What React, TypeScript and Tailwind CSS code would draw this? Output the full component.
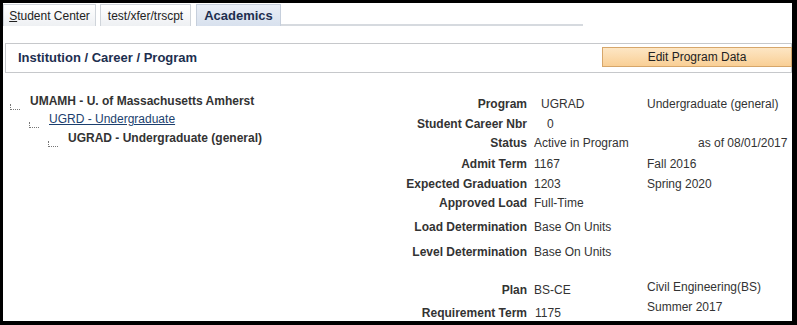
import React from "react"

const rows = [
  { label: "Program", value: "UGRAD", valueClass: "pl-[14px]", extra: "Undergraduate (general)", h: "h-[20px]" },
  { label: "Student Career Nbr", value: "0", valueClass: "pl-[20px]", extra: "", h: "h-[19px]" },
  { label: "Status", value: "Active in Program", valueClass: "pl-[7px]", extra: "", h: "h-[21px]", asOf: "as of 08/01/2017" },
  { label: "Admit Term", value: "1167", valueClass: "pl-[7px]", extra: "Fall 2016", h: "h-[20px]" },
  { label: "Expected Graduation", value: "1203", valueClass: "pl-[7px]", extra: "Spring 2020", h: "h-[19px]" },
  { label: "Approved Load", value: "Full-Time", valueClass: "pl-[7px]", extra: "", h: "h-[24px]" },
  { label: "Load Determination", value: "Base On Units", valueClass: "pl-[7px]", extra: "", h: "h-[25px]" },
  { label: "Level Determination", value: "Base On Units", valueClass: "pl-[7px]", extra: "", h: "h-[38px]" },
]

function TreeElbow() {
  return <div className="w-[10px] h-[6px] border-l border-b border-dotted border-[#777] mr-[10px] -mt-[8px] shrink-0" />
}

export default function App() {
  return (
    <div className="w-[797px] h-[325px] bg-black pt-[3px] pl-[3px] pr-[5px] pb-[4px] font-['Liberation_Sans',Arial,sans-serif] text-[12px] text-[#333]">
      <div className="w-full h-full bg-white overflow-hidden">
        {/* Tabs */}
        <div className="flex items-end h-[23px]">
          <div className="h-[22px] w-[93px] flex items-center justify-center border border-[#cfd4da] border-b-0 bg-gradient-to-b from-white to-[#eef0f3] text-[#222]">
            <span><span className="underline">S</span>tudent Center</span>
          </div>
          <div className="h-[22px] w-[91px] ml-[4px] flex items-center justify-center border border-[#cfd4da] border-b-0 bg-gradient-to-b from-white to-[#eef0f3] text-[#222]">
            test/xfer/trscpt
          </div>
          <div className="h-[22px] w-[85px] ml-[5px] flex items-center justify-center border border-[#c6cfdc] border-b-0 bg-gradient-to-b from-[#e9eef6] to-[#d8e1ee] text-[#1d2f4f] font-bold text-[13px]">
            Academics
          </div>
          <div className="w-[302px] border-b-2 border-[#d6dadf]" />
        </div>

        {/* Section header */}
        <div className="mt-[17px] ml-[2px] h-[30px] border border-[#c6c8cb] flex items-center justify-between">
          <span className="pl-[12px] font-bold text-[13px] text-[#1d2f4f]">Institution / Career / Program</span>
          <button className="h-[20px] w-[190px] -mt-[3px] mr-[-1px] border border-[#d6a66a] bg-gradient-to-b from-[#fde6c4] to-[#f9cf95] text-[#222] text-[12px]">
            Edit Program Data
          </button>
        </div>

        <div className="flex mt-[16px]">
          {/* Tree */}
          <div className="w-[374px] pl-[7px] pt-[3px]">
            <div className="flex items-end h-[18px]">
              <TreeElbow />
              <span className="font-bold">UMAMH - U. of Massachusetts Amherst</span>
            </div>
            <div className="flex items-end h-[18px] pl-[19px]">
              <TreeElbow />
              <span className="underline text-[#1c3f6e]">UGRD - Undergraduate</span>
            </div>
            <div className="flex items-end h-[19px] pl-[38px]">
              <TreeElbow />
              <span className="font-bold">UGRAD - Undergraduate (general)</span>
            </div>
          </div>

          {/* Details */}
          <div className="flex-1 pt-[6px]">
            {rows.map((r) => (
              <div key={r.label} className={`flex items-start ${r.h}`}>
                <div className="w-[150px] text-right font-bold">{r.label}</div>
                <div className={`w-[120px] ${r.valueClass}`}>{r.value}</div>
                {r.asOf ? (
                  <div className="pl-[51px]">{r.asOf}</div>
                ) : (
                  <div>{r.extra}</div>
                )}
              </div>
            ))}
            <div className="flex items-start h-[23px]">
              <div className="w-[150px] text-right font-bold">Plan</div>
              <div className="w-[120px] pl-[7px]">BS-CE</div>
              <div className="-mt-[3px]">Civil Engineering(BS)</div>
            </div>
            <div className="flex items-start h-[20px]">
              <div className="w-[150px] text-right font-bold">Requirement Term</div>
              <div className="w-[120px] pl-[8px]">1175</div>
              <div className="-mt-[6px]">Summer 2017</div>
            </div>
          </div>
        </div>
      </div>
    </div>
  )
}
